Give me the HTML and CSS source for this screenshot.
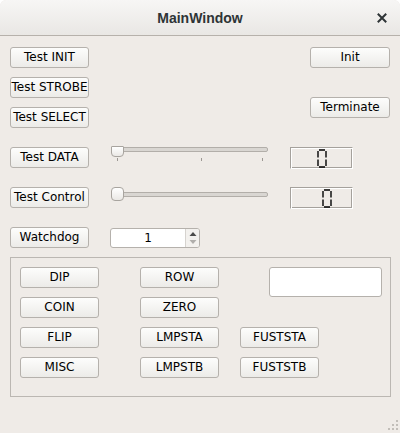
FILE: index.html
```html
<!DOCTYPE html>
<html>
<head>
<meta charset="utf-8">
<link rel="stylesheet" href="styles.css">
</head>
<body>
<div class="window">
  <div class="titlebar">
    <span class="title">MainWindow</span>
    <svg class="close" width="10" height="10" viewBox="0 0 10 10"><path d="M1.5 1.5 L8.5 8.5 M8.5 1.5 L1.5 8.5" stroke="#2e3436" stroke-width="2" stroke-linecap="square"/></svg>
  </div>
  <div class="content">
    <div class="top">
      <button class="btn r1">Test INIT</button>
      <button class="btn r1 right">Init</button>
      <button class="btn r2">Test STROBE</button>
      <button class="btn r3">Test SELECT</button>
      <button class="btn right terminate">Terminate</button>
    </div>
    <div class="middle">
      <button class="btn">Test DATA</button>
      <div class="slider">
        <div class="groove g-top"></div>
        <div class="handle h-tick"></div>
        <div class="tick t1"></div>
        <div class="tick t2"></div>
        <div class="tick t3"></div>
      </div>
      <div class="lcd lcd1">
        <svg width="10" height="19" viewBox="0 0 10 19"><path d="M2 1 H8 M1 2 V8.5 M9 2 V8.5 M1 10.5 V17 M9 10.5 V17 M2 18 H8" stroke="#000" stroke-width="1.4" fill="none"/></svg>
      </div>
      <button class="btn">Test Control</button>
      <div class="slider">
        <div class="groove g-mid"></div>
        <div class="handle h-round"></div>
      </div>
      <div class="lcd lcd2">
        <svg width="10" height="19" viewBox="0 0 10 19"><path d="M2 1 H8 M1 2 V8.5 M9 2 V8.5 M1 10.5 V17 M9 10.5 V17 M2 18 H8" stroke="#000" stroke-width="1.4" fill="none"/></svg>
      </div>
      <button class="btn">Watchdog</button>
      <div class="spin">
        <span class="spin-val">1</span>
        <span class="spin-arrows">
          <svg width="8" height="16" viewBox="0 0 8 16"><path d="M0.5 6 L4 2 L7.5 6 Z" fill="#4a4a4a"/><path d="M0.5 10 L4 14 L7.5 10 Z" fill="#b0aeab"/></svg>
        </span>
      </div>
    </div>
    <div class="group">
      <button class="btn gb">DIP</button>
      <button class="btn gb">ROW</button>
      <div class="edit"></div>
      <button class="btn gb">COIN</button>
      <button class="btn gb">ZERO</button>
      <button class="btn gb">FLIP</button>
      <button class="btn gb">LMPSTA</button>
      <button class="btn gb">FUSTSTA</button>
      <button class="btn gb">MISC</button>
      <button class="btn gb">LMPSTB</button>
      <button class="btn gb">FUSTSTB</button>
    </div>
  </div>
  <svg class="grip" width="12" height="12" viewBox="0 0 12 12">
    <g fill="#c2beb9">
      <rect x="9" y="1" width="2" height="2"/>
      <rect x="5" y="5" width="2" height="2"/><rect x="9" y="5" width="2" height="2"/>
      <rect x="1" y="9" width="2" height="2"/><rect x="5" y="9" width="2" height="2"/><rect x="9" y="9" width="2" height="2"/>
    </g>
  </svg>
</div>
</body>
</html>
```

FILE: styles.css
```css
html, body {
  margin: 0;
  padding: 0;
  background: #ffffff;
}
.window {
  position: relative;
  width: 400px;
  height: 433px;
  background: #efebe7;
  font-family: "DejaVu Sans", sans-serif;
  font-size: 12px;
  color: #000;
  overflow: hidden;
  border-radius: 6px 6px 0 0;
}
.titlebar {
  position: relative;
  height: 35px;
  border-bottom: 1px solid #b6b1ab;
  background: linear-gradient(#f7f6f5, #e9e7e4);
  border-radius: 6px 6px 0 0;
  display: flex;
  align-items: center;
  justify-content: center;
}
.title {
  font-family: "Liberation Sans", sans-serif;
  font-weight: bold;
  font-size: 14px;
  color: #2e3436;
}
.close {
  position: absolute;
  right: 13px;
  top: 13px;
}
.content {
  padding: 11px 10px 0 10px;
}
.btn {
  box-sizing: border-box;
  width: 79px;
  height: 21px;
  padding: 0;
  margin: 0;
  border: 1px solid #b5b1ac;
  border-radius: 3px;
  background: linear-gradient(#fdfdfc, #ecebe8);
  font-family: "DejaVu Sans", sans-serif;
  font-size: 12px;
  color: #000;
  white-space: nowrap;
  overflow: visible;
  text-align: center;
  line-height: 19px;
}
.top {
  display: grid;
  grid-template-columns: 100px 1fr;
  grid-template-rows: 21px 21px 21px;
  row-gap: 9px;
}
.top .btn { grid-column: 1; }
.top .r1 { grid-row: 1; }
.top .r2 { grid-row: 2; }
.top .r3 { grid-row: 3; }
.top .right {
  grid-column: 2;
  justify-self: end;
  width: 80px;
}
.top .terminate {
  grid-row: 2 / span 2;
  align-self: start;
  margin-top: 20px;
}
.middle {
  margin-top: 19px;
  display: grid;
  grid-template-columns: 100px 180px 1fr;
  grid-auto-rows: 21px;
  row-gap: 19px;
}
.slider {
  position: relative;
  width: 158px;
  height: 21px;
}
.groove {
  position: absolute;
  left: 1px;
  right: 0;
  height: 5px;
  box-sizing: border-box;
  border: 1px solid #b2aea9;
  border-radius: 2px;
  background: #d9d6d2;
}
.g-top { top: 0; }
.g-mid { top: 5px; }
.handle {
  position: absolute;
  left: 1px;
  width: 13px;
  box-sizing: border-box;
  border: 1px solid #a8a49f;
  background: linear-gradient(#ffffff, #eae8e5);
}
.h-tick {
  top: -1px;
  height: 11px;
  border-radius: 1px 1px 4px 4px;
}
.h-round {
  top: 0;
  height: 14px;
  border-radius: 4px;
}
.tick {
  position: absolute;
  top: 11px;
  width: 1px;
  height: 3px;
  background: #9c9893;
}
.t1 { left: 7px; }
.t2 { left: 91px; }
.t3 { left: 152px; }
.lcd {
  box-sizing: border-box;
  width: 63px;
  height: 22px;
  border: 1px solid;
  border-color: #a5a19c #ffffff #ffffff #a5a19c;
  box-shadow: inset 1px 1px 0 #ffffff, inset -1px -1px 0 #a5a19c;
  display: flex;
  align-items: flex-start;
  padding-top: 1px;
}
.lcd1 { padding-left: 26px; }
.lcd2 { padding-left: 31px; }
.spin {
  box-sizing: border-box;
  width: 90px;
  height: 20px;
  align-self: end;
  border: 1px solid #b5b1ac;
  border-radius: 3px;
  background: #ffffff;
  display: flex;
  align-items: stretch;
}
.spin-val {
  flex: 1;
  text-align: center;
  line-height: 18px;
  font-size: 12px;
}
.spin-arrows {
  width: 13px;
  border-left: 1px solid #d6d3cf;
  background: #f3f1ee;
  display: flex;
  align-items: center;
  justify-content: center;
  border-radius: 0 2px 2px 0;
}
.group {
  box-sizing: border-box;
  width: 381px;
  margin-top: 9px;
  height: 140px;
  border: 1px solid #bbb7b2;
  padding: 9px 8px 0 9px;
  display: grid;
  grid-template-columns: 120px 100px 1fr;
  grid-template-rows: 21px 21px 21px 21px;
  row-gap: 9px;
}
.group .edit {
  grid-column: 3;
  grid-row: 1 / span 2;
  justify-self: end;
  align-self: start;
  box-sizing: border-box;
  width: 113px;
  height: 30px;
  background: #ffffff;
  border: 1px solid #b5b1ac;
  border-radius: 3px;
}
.group .btn:nth-child(4) { grid-column: 1; }
.group .btn:nth-child(5) { grid-column: 2; }
.group .btn:nth-child(6) { grid-column: 1; }
.grip {
  position: absolute;
  right: 1px;
  bottom: 2px;
}
```
